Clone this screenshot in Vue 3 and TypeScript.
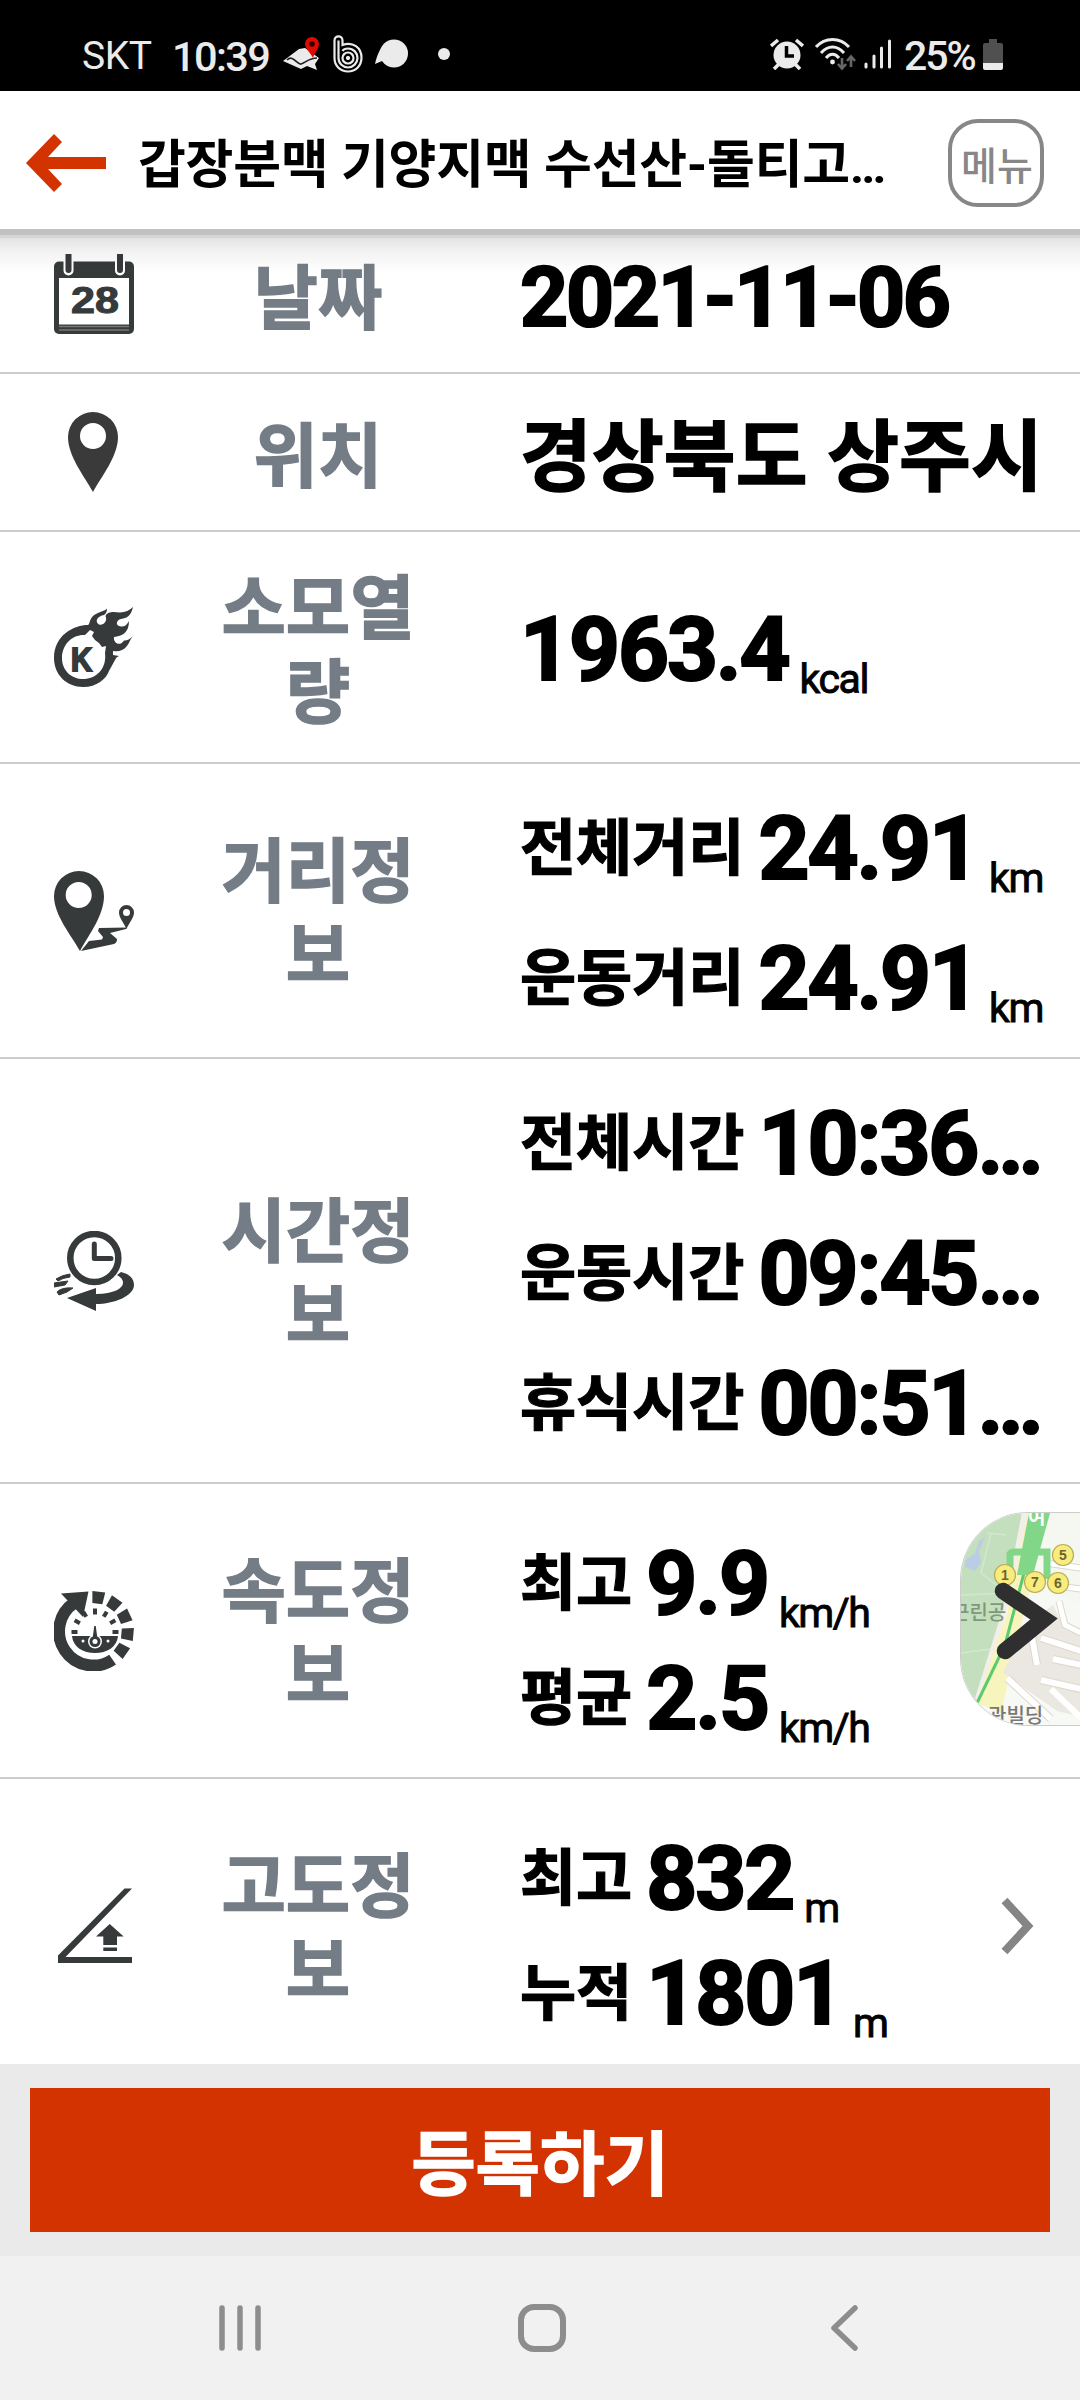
<script setup lang="ts">
interface Metric {
  name?: string
  value: string
  unit?: string
  cut?: boolean
}
interface InfoRow {
  id: string
  label: string[]
  kind: 'date' | 'place' | 'single' | 'wide' | 'tight'
  height: number
  pitch: number
  metrics: Metric[]
}

const rows: InfoRow[] = [
  { id: 'date', label: ['날짜'], kind: 'date', height: 158, pitch: 156, metrics: [{ value: '2021-11-06' }] },
  { id: 'place', label: ['위치'], kind: 'place', height: 158, pitch: 150, metrics: [{ value: '경상북도 상주시' }] },
  { id: 'kcal', label: ['소모열', '량'], kind: 'single', height: 232, pitch: 130, metrics: [{ value: '1963.4', unit: 'kcal' }] },
  {
    id: 'distance', label: ['거리정', '보'], kind: 'wide', height: 295, pitch: 130,
    metrics: [
      { name: '전체거리', value: '24.91', unit: 'km' },
      { name: '운동거리', value: '24.91', unit: 'km' },
    ],
  },
  {
    id: 'time', label: ['시간정', '보'], kind: 'wide', height: 425, pitch: 130,
    metrics: [
      { name: '전체시간', value: '10:36', cut: true },
      { name: '운동시간', value: '09:45', cut: true },
      { name: '휴식시간', value: '00:51', cut: true },
    ],
  },
  {
    id: 'speed', label: ['속도정', '보'], kind: 'tight', height: 295, pitch: 115,
    metrics: [
      { name: '최고', value: '9.9', unit: 'km/h' },
      { name: '평균', value: '2.5', unit: 'km/h' },
    ],
  },
  {
    id: 'altitude', label: ['고도정', '보'], kind: 'tight', height: 295, pitch: 115,
    metrics: [
      { name: '최고', value: '832', unit: 'm' },
      { name: '누적', value: '1801', unit: 'm' },
    ],
  },
]

const gaugeTicks = [-180, -150, -120, -90, -60, -30, 0]
const ringSegments = [-83, -54, -25, 5, 35]
</script>

<template>
  <div class="screen">
    <div class="status">
      <div class="status-left">
        <span class="carrier">SKT</span>
        <span class="clock">10:39</span>
        <svg class="s-map" width="38" height="34" viewBox="0 0 38 34">
          <path d="M0 24 16 12 22 11 36 21 32 27 34 33 24 29 18 32Z" fill="#ebebeb" />
          <path d="M4 23C10 17 14 28 18 27S26 21 34 21" fill="none" stroke="#222" stroke-width="1.7" />
          <path d="M30 21C28 16 22 12 22 7A7 7 0 0 1 36 7C36 12 31 16 30 21Z" fill="#e00a00" />
          <circle cx="29" cy="7" r="2.8" fill="#300" />
        </svg>
        <svg class="s-b" width="30" height="38" viewBox="0 0 30 38" fill="none" stroke="#ebebeb">
          <path d="M1.5 5.500C1.500 0 9.500 0 9.500 5.500V10C20 6 28.500 13 28.500 22.500C28.500 31 22.500 36.500 15 36.500S1.500 31 1.500 23Z" stroke-width="2.200" />
          <path d="M5.500 5.500V23C5.500 28.500 10 32.500 15 32.500S24.500 28 24.500 23 20.500 13.500 15 13.500C12 13.500 10 15 9.500 16" stroke-width="2.200" />
          <circle cx="15" cy="23" r="5.500" stroke-width="2.200" />
          <circle cx="15" cy="23" r="1.700" fill="#ebebeb" />
        </svg>
        <svg class="s-bubble" width="34" height="30" viewBox="0 0 34 30" fill="#ebebeb">
          <circle cx="19" cy="14.500" r="14" />
          <path d="M6 9C3 14 1 20 0 25L7 22 13 26Z" />
        </svg>
        <span class="s-dot"></span>
      </div>
      <div class="status-right">
        <svg width="34" height="32" viewBox="0 0 34 32">
          <g stroke="#ebebeb" stroke-width="3.600">
            <path d="M1 8 8 2M33 8 26 2M4 31 10 25M30 31 24 25" />
          </g>
          <circle cx="17" cy="17" r="13.500" fill="#ebebeb" />
          <path d="M16.500 8V18H24" fill="none" stroke="#000" stroke-width="3.500" />
        </svg>
        <svg class="s-wifi" width="42" height="34" viewBox="0 0 42 34" fill="none" stroke="#ebebeb" stroke-width="3">
          <path d="M1 10C10 0 25 0 34 10M6 16C13 8 22 8 29 16M11 21C15 16 20 16 24 21" />
          <circle cx="17.500" cy="25" r="2.400" fill="#ebebeb" stroke="none" />
          <g stroke="#666" stroke-width="2.600"><path d="M27 21V31M23 27 27 31.500 31 27M36 30V20M32 24 36 19.500 40 24" /></g>
        </svg>
        <svg class="s-signal" width="28" height="32" viewBox="0 0 28 32" stroke="#ebebeb" stroke-width="3" stroke-linecap="round">
          <path d="M2 26V29M10 18V29M17.500 10V29M25.500 3V29" />
        </svg>
        <span class="percent">25%</span>
        <svg class="s-battery" width="20" height="33" viewBox="0 0 20 33">
          <path d="M6 1H14V5H18Q20 5 20 7V26H0V7Q0 5 2 5H6Z" fill="#505050" />
          <path d="M0 25H20V30Q20 32 18 32H2Q0 32 0 30Z" fill="#ebebeb" />
        </svg>
      </div>
    </div>

    <header class="header">
      <svg class="back" width="80" height="58" viewBox="0 0 80 58">
        <path d="M0 29 28 0 36 8 22 23H80V35H22L36 50 28 58Z" fill="#d33300" />
      </svg>
      <h1 class="title">갑장분맥 기양지맥 수선산-돌티고<span class="title-dots">…</span></h1>
      <button class="menu">메뉴</button>
    </header>

    <main class="list">
      <section
        v-for="row in rows"
        :key="row.id"
        class="row"
        :class="'row-' + row.id"
        :style="{ height: row.height + 'px' }"
      >
        <div class="icon">
          <svg width="80" height="80" viewBox="0 0 80 80" fill="#363a3b">
            <template v-if="row.id === 'date'">
              <rect x="0" y="7.500" width="80" height="72.500" rx="5" />
              <rect x="5" y="24" width="70" height="46.500" fill="#fff" />
              <path d="M5 72.500H75M5 76H75" stroke="#777" stroke-width="1.300" />
              <path d="M14.500 0V16.500M66 0V16.500" stroke="#fff" stroke-width="10" stroke-linecap="round" />
              <path d="M14.500 0V16M66 0V16" stroke="#363a3b" stroke-width="6" stroke-linecap="round" />
              <text x="17" y="59" class="cal-num" textLength="48" lengthAdjust="spacingAndGlyphs">28</text>
            </template>
            <template v-else-if="row.id === 'place'">
              <path fill="#3a3a3a" fill-rule="evenodd" d="M39 80C30 64 14 44 14 25A25 25 0 0 1 64 25C64 44 48 64 39 80ZM39 11A13 13 0 1 0 39 37A13 13 0 1 0 39 11Z" />
            </template>
            <template v-else-if="row.id === 'kcal'">
              <path d="M34 18C20 18 0 28 0 51C0 68 13 80 29 80C43 80 52 72 55 64L61 53Q62 50 65 49L59 48V44Q64 45 68 43C75 40 75 33 79 29Q74 34 70 33.500C66 40 59 36 60 30C68 29 75 26 75 14Q72 20 67 19.500C61 19 62 13 67 12C73 11 77 9 79 0Q74 5 66 5.500C60 5 54 4 51.500 9C54 14 49 19 45 17.500C40 14 44 9 50 8Q53 6 53 1.500C50 5 43 5 39 9C35 13 36 17 34 18ZM36 23 31 28C20 27 8 36 8 51C8 64 18 72 29 72C42 72 53 62 51 46L52 39 48 40 45 36 41 33 38 29 40 25Z" fill-rule="evenodd" />
              <text x="17" y="63.500" class="k-letter" textLength="21" lengthAdjust="spacingAndGlyphs">K</text>
            </template>
            <template v-else-if="row.id === 'distance'">
              <path fill-rule="evenodd" d="M26 80C17 64 0 44 0 25A25 25 0 0 1 50 25C50 44 36 62 26 80ZM24.700 11A13 13 0 1 0 24.700 37A13 13 0 1 0 24.700 11Z" />
              <path fill-rule="evenodd" d="M72.500 58C70 52 65 47 65 41.500A7.500 7.500 0 0 1 80 41.500C80 47 75 52 72.500 58ZM72.500 38A3.500 3.500 0 1 0 72.500 45A3.500 3.500 0 1 0 72.500 38Z" />
              <path d="M27 80 35 70 48 68.500 49 66 44 60 45 57 73 56.500 72 58 56 62 63 68Q63 72 60 73Z" />
            </template>
            <template v-else-if="row.id === 'time'">
              <circle cx="40.300" cy="27" r="24" fill="none" stroke="#363a3b" stroke-width="6.500" />
              <path d="M40.300 13V27.500H57" fill="none" stroke="#363a3b" stroke-width="5" stroke-linecap="round" stroke-linejoin="round" />
              <path d="M13 67 42 57V63C60 63 69 57 69 52Q69 47 63 44L67 41C76 43 80 48 80 54C80 65 60 73 42 73V80Z" />
              <path d="M2 48Q8 44 16 43L16 46Q8 47 4 50ZM0 52 14 50 11 54 0 56ZM3 61Q8 56 19 57L13 61 5 64Z" stroke="#363a3b" stroke-width="1" />
            </template>
            <template v-else-if="row.id === 'speed'">
              <path d="M58.600 68.600A34 34 0 1 1 20 12" fill="none" stroke="#363a3b" stroke-width="12" />
              <path d="M7 2.500 34.500 .500 29 26Z" />
              <path v-for="a in ringSegments" :key="a" d="M67.500 35 79.500 33.500V46.500L67.500 45Z" :transform="`rotate(${a} 40 40)`" />
              <rect v-for="a in gaugeTicks" :key="'t' + a" x="58.500" y="39" width="6" height="4" :transform="`rotate(${a} 41 41)`" />
              <path d="M18 45H64C63 56 53 62 41 62S19 56 18 45Z" />
              <circle cx="41" cy="50.500" r="7" fill="#fff" />
              <circle cx="41" cy="50.500" r="5.500" />
              <path d="M39 50 41 35 43 50Z" stroke="#363a3b" stroke-width="1.500" />
              <circle cx="41" cy="50.500" r="2.500" fill="#fff" />
              <circle cx="29" cy="50" r="1.500" fill="#fff" />
              <circle cx="54" cy="50" r="1.500" fill="#fff" />
            </template>
            <template v-else>
              <path d="M4 77H78V71H11.500L78 2.500H70.500L4 69.500Z" />
              <path d="M55.700 38 69.700 50.500H63V59H49.300V50.500H42ZM49.300 61.500H63V65H49.300Z" />
            </template>
          </svg>
        </div>
        <div class="label">
          <span v-for="part in row.label" :key="part">{{ part }}</span>
        </div>
        <div class="values" :class="row.kind">
          <div v-for="(m, i) in row.metrics" :key="i" class="metric" :style="{ height: row.pitch + 'px', lineHeight: row.pitch + 'px' }">
            <span v-if="m.name" class="name">{{ m.name }}</span><span class="num">{{ m.value }}</span><span v-if="m.cut" class="dots">…</span><span v-if="m.unit" class="unit">{{ m.unit }}</span>
          </div>
        </div>
        <svg v-if="row.id === 'altitude'" class="more" width="34" height="58" viewBox="0 0 34 58">
          <path d="M3.500 3.500 27 29 3.500 54.500" fill="none" stroke="#858585" stroke-width="8" />
        </svg>
      </section>
    </main>

    <div class="map-tab">
      <svg width="120" height="214" viewBox="0 0 120 214">
        <rect width="120" height="214" fill="#f7f9f4" />
        <path d="M0 0H61L45 95 17 190 0 200Z" fill="#c3dfbd" />
        <path d="M0 82 48 80M0 140 30 136M30 20 20 60 48 82M26 20 45 22" stroke="#d3e8ce" stroke-width="1.500" fill="none" />
        <path d="M4 48 14 40 18 28 24 24 18 38 20 50 14 58 4 54Z" fill="#b9cde4" />
        <path d="M61 0H69L45 100 20 192 14 185 42 95Z" fill="#f3efe8" />
        <path d="M67 0H88L64 96 40 200 16 190 46 100Z" fill="#f8f4bd" />
        <path d="M88 0H120V90L92 80 78 62Z" fill="#f5f8f0" />
        <path d="M66 110 92 92 104 116 120 120V204L96 198 56 170 42 160Z" fill="#ebe7e1" />
        <g stroke="#ddd7cf" fill="none">
          <path d="M84 50 120 55M88 72 120 76M98 88 104 112 120 120" stroke-width="7" />
          <path d="M46 165 90 206M70 118 76 152M92 146 120 152M80 167 120 176M80 125 120 138" stroke-width="8" />
        </g>
        <g stroke="#fff" fill="none">
          <path d="M84 50 120 55M88 72 120 76M98 88 104 112 120 120" stroke-width="5" />
          <path d="M46 165 90 206M70 118 76 152M92 146 120 152M80 167 120 176M80 125 120 138M90 176 120 205" stroke-width="6" />
        </g>
        <path d="M63 60 44 132 16 190" stroke="#5acb6e" stroke-width="3" fill="none" />
        <path d="M68 0H89L72 62H56Z" fill="#82d688" />
        <path d="M49 60V41Q50 39 54 39H86V66" stroke="#82d688" stroke-width="7" fill="none" />
        <text x="67" y="11" class="station">여</text>
        <g fill="#f7ec7c" stroke="#b9ad5c" stroke-width="1.200">
          <circle cx="102" cy="42" r="10.500" /><circle cx="44" cy="62" r="10.500" /><circle cx="74" cy="69" r="10.500" /><circle cx="97" cy="70" r="10.500" />
        </g>
        <g class="exit" text-anchor="middle">
          <text x="102" y="47">5</text><text x="44" y="67">1</text><text x="74" y="74">7</text><text x="97" y="75">6</text>
        </g>
        <text x="-10" y="107" class="place-name" fill="#7f987d">근린공</text>
        <text x="27" y="210" class="place-name" fill="#777">관빌딩</text>
        <path d="M42 78 83 106 44 138" fill="none" stroke="#2f2f2f" stroke-width="16.500" stroke-linecap="round" stroke-linejoin="miter" />
      </svg>
    </div>

    <footer class="action">
      <button class="submit">등록하기</button>
    </footer>
    <nav class="nav">
      <svg width="42" height="46" viewBox="0 0 42 46" stroke="#8d8d8d" stroke-width="5.500" stroke-linecap="round"><path d="M3 3V43M21 3V43M39 3V43" /></svg>
      <svg class="home" width="48" height="48" viewBox="0 0 48 48"><rect x="3" y="3" width="42" height="42" rx="13" fill="none" stroke="#8d8d8d" stroke-width="6" /></svg>
      <svg width="28" height="46" viewBox="0 0 28 46"><path d="M25 3 4 23 25 43" fill="none" stroke="#8d8d8d" stroke-width="5.500" stroke-linecap="round" stroke-linejoin="round" /></svg>
    </nav>
  </div>
</template>

<style>
body {
  margin: 0;
  background: #fff;
}
</style>

<style scoped>
.screen {
  position: relative;
  display: flex;
  flex-direction: column;
  width: 1080px;
  height: 2400px;
  overflow: hidden;
  background: #fff;
  color: #000;
  font-family: Roboto, "Noto Sans CJK KR", sans-serif;
}
.screen svg {
  display: block;
  flex: none;
}
.status {
  flex: none;
  display: flex;
  justify-content: space-between;
  box-sizing: border-box;
  height: 91px;
  padding: 17px 77px 0 82px;
  background: #000;
  color: #ebebeb;
}
.status-left,
.status-right {
  display: flex;
  align-items: center;
  height: 74px;
}
.carrier {
  width: 90px;
  padding-top: 4px;
  font-size: 39px;
  letter-spacing: -0.5px;
}
.clock {
  width: 111px;
  padding-top: 4px;
  font-size: 41.500px;
  font-weight: 500;
  letter-spacing: -1.600px;
}
.s-b { margin-left: 12px; }
.s-bubble { margin-left: 12px; }
.s-dot {
  width: 12px;
  height: 12px;
  margin-left: 29px;
  border-radius: 50%;
  background: #ebebeb;
}
.s-wifi { margin-left: 11px; }
.s-signal { margin-left: 7px; }
.percent {
  width: 78px;
  margin-left: 12px;
  margin-right: 1px;
  padding-top: 4px;
  font-size: 41px;
  font-weight: 500;
  letter-spacing: -2px;
}
.header {
  position: relative;
  z-index: 2;
  flex: none;
  display: flex;
  align-items: center;
  box-sizing: border-box;
  height: 138px;
  padding: 0 36px 0 26px;
  background: #fff;
}
.header::after {
  content: "";
  position: absolute;
  left: 0;
  right: 0;
  top: 138px;
  height: 44px;
  background: linear-gradient(rgba(0, 0, 0, 0.245) 0 6px, rgba(0, 0, 0, 0.165) 6px 9px, rgba(0, 0, 0, 0.115) 9px, rgba(0, 0, 0, 0.05) 22px, rgba(0, 0, 0, 0) 44px);
}
.back { margin-top: 5px; }
.title {
  flex: 1;
  margin: 12px 0 0 32px;
  font-size: 52px;
  line-height: 80px;
  font-weight: 700;
  letter-spacing: -0.250px;
  white-space: nowrap;
}
.title-dots {
  font-size: 49px;
  letter-spacing: 0;
}
.menu {
  flex: none;
  box-sizing: border-box;
  width: 96px;
  height: 88px;
  margin-top: 6px;
  padding: 0 0 0 2px;
  border: 4px solid #878787;
  border-radius: 30px;
  background: #fff;
  color: #878787;
  font: 500 39px/72px "Noto Sans CJK KR", sans-serif;
}
.list {
  flex: none;
  height: 1835px;
  overflow: hidden;
}
.row {
  display: flex;
  align-items: center;
  box-sizing: border-box;
  border-bottom: 2px solid #ccc;
}
.row-date { margin-top: -13px; }
.icon {
  flex: none;
  width: 136px;
  padding-left: 54px;
}
.cal-num {
  font: 700 37px "Liberation Sans", sans-serif;
  stroke: #363a3b;
  stroke-width: 1px;
}
.k-letter {
  font: 700 33px "Liberation Sans", sans-serif;
  stroke: #363a3b;
  stroke-width: 2px;
}
.label {
  flex: none;
  display: flex;
  flex-direction: column;
  align-items: center;
  width: 256px;
  padding-bottom: 3px;
  color: #747c86;
  font: 700 70px/84px "Noto Sans CJK KR", sans-serif;
  -webkit-text-stroke: 1.400px #747c86;
}
.row-date .label,
.row-place .label {
  padding-bottom: 1px;
}
.values {
  flex: none;
  width: 524px;
  margin-left: 74px;
  white-space: nowrap;
}
.values.date { padding-top: 3px; }
.values.place { padding-top: 6px; }
.values.single,
.values.wide { padding-top: 6px; }
.values.tight { padding-top: 20px; }
.metric {
  font-size: 89px;
  font-weight: 700;
}
.metric span {
  display: inline-block;
}
.num {
  letter-spacing: -2.100px;
  -webkit-text-stroke: 2.200px #000;
}
.dots {
  -webkit-text-stroke: 2.200px #000;
}
.date .num {
  font-size: 84px;
  letter-spacing: -2.300px;
}
.place .num {
  font-size: 78px;
  letter-spacing: 0.150px;
  -webkit-text-stroke: 1.600px #000;
}
.name {
  margin-right: 14px;
  font-size: 61px;
  line-height: 60px;
  vertical-align: 9px;
  -webkit-text-stroke: 1.200px #000;
}
.unit {
  margin-left: 11px;
  font-size: 41px;
  line-height: 40px;
  font-weight: 400;
  letter-spacing: -1.400px;
  vertical-align: -13px;
  -webkit-text-stroke: 0.900px #000;
}
.more { margin-left: -43px; }
.map-tab {
  position: absolute;
  z-index: 3;
  left: 960px;
  top: 1512px;
  width: 120px;
  height: 214px;
  overflow: hidden;
  border: 1.500px solid #ccc;
  border-right: 0;
  border-radius: 68px 0 0 68px;
  box-sizing: border-box;
}
.station {
  font: 700 19px "Noto Sans CJK KR", sans-serif;
  fill: #fff;
}
.exit {
  font: 700 14px "Liberation Sans", sans-serif;
  fill: #6c6530;
}
.place-name {
  font: 500 20px "Noto Sans CJK KR", sans-serif;
}
.action {
  flex: none;
  box-sizing: border-box;
  height: 192px;
  padding: 24px 30px;
  background: #eaeaea;
}
.submit {
  display: block;
  width: 1020px;
  height: 144px;
  padding: 0;
  border: 0;
  background: #d33300;
  color: #fff;
  font: 700 70px/142px "Noto Sans CJK KR", sans-serif;
  -webkit-text-stroke: 1.400px #fff;
}
.nav {
  flex: none;
  display: flex;
  align-items: center;
  justify-content: space-between;
  box-sizing: border-box;
  height: 144px;
  padding: 0 222px 0 219px;
  background: #f1f1f1;
}
.home { margin-right: 8px; }
</style>
